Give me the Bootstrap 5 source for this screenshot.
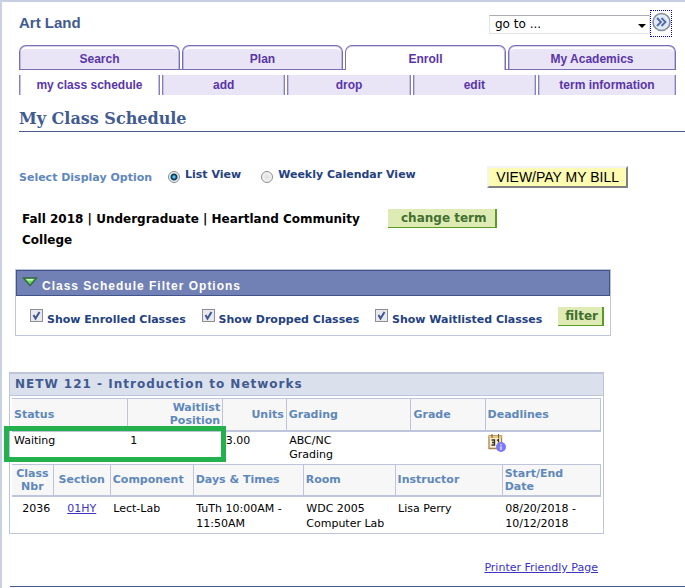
<!DOCTYPE html>
<html lang="en">
<head>
<meta charset="utf-8">
<meta name="viewport" content="width=device-width, initial-scale=1">
<title>My Class Schedule</title>
<link href="https://cdn.jsdelivr.net/npm/bootstrap@5.3.0/dist/css/bootstrap.min.css" rel="stylesheet">
<style>
  :root { --navy: #415a90; --violet: #5a35a8; --steel: #5f88ba; --edge: #bec5db; }
  body { font: 11px/15px "DejaVu Sans", Verdana, sans-serif; color: #000; background: #fff; }
  .page { border-top: 2px solid #c7cfe1; border-left: 2px solid #c9d2e5; min-height: 100vh; }
  .arial { font-family: "Liberation Sans", Arial, sans-serif; }
  .topbar { padding: 8px 13px 0 17px; height: 43px; }
  .student { font-size: 15px; line-height: 20px; font-weight: 700; color: var(--navy); margin: 3px 0 0; }
  .goto { width: 161px; height: 19px; margin-top: 5px; padding: 0 5px; font-size: 12px; line-height: 15px; color: #000; appearance: none;
    border: 1px solid #e2e3ea; border-top-color: #abadb3; border-radius: 1px;
    background: #fff url("data:image/svg+xml,%3Csvg xmlns='http://www.w3.org/2000/svg' viewBox='0 0 8 4'%3E%3Cpath d='M0 0h8L4 4z'/%3E%3C/svg%3E") no-repeat right 3px top 8px / 8px 4px; }
  .go-btn { width: 22px; height: 27px; padding: 1px; border: 1px dotted #0000c8; background: none; display: block; line-height: 0; }
  .go-btn svg { display: block; margin-bottom: 4px; }
  .tabs, .subtabs { display: flex; gap: 2px; margin: 0 9px 0 17px; text-align: center; font-size: 12px; font-weight: 700; }
  .tabs { border-bottom: 1px solid #7770b5; }
  .tabs a, .subtabs a { color: var(--violet); text-decoration: none; }
  .tabs a { flex: 161 1 0; height: 24px; line-height: 26px; border: 1px solid #7770b5; border-bottom: 0; border-radius: 7px 7px 0 0; background: #e9e5f6;
    box-shadow: inset 1px 0 #bdb8e0, inset -1px 0 #bdb8e0, inset 0 1px #d4d0eb, inset 0 3px #fff; }
  .tabs a.current { height: 25px; margin-bottom: -1px; background: #fff; box-shadow: inset 0 1px #d4d0eb, inset -1px 0 #bdb8e0; }
  .tabs a.last { flex-grow: 168; }
  .subtabs { margin-top: 5px; }
  .subtabs a { flex: 124 1 0; line-height: 20px; background: #e9e5f6; border: solid #8580bd; border-width: 0 1px; box-shadow: inset 1px 0 #c5c1e3, inset -1px 0 #c5c1e3; }
  .subtabs a.current { flex-grow: 142; background: #fff; }
  .subtabs a.last { flex-grow: 139; }
  h1 { font: 700 16px/22px "DejaVu Serif", serif; color: var(--navy); margin: 13px 0 0 17px; padding-bottom: 1px; border-bottom: 1px solid #4a5a90; }
  .options { margin: 34px 57px 0 17px; color: #24417f; font-weight: 700; }
  .options label { padding-top: 1px; }
  .options .caption-text { color: var(--steel); padding: 4px 12px 0 0; margin-right: 4px; }
  .options input { appearance: none; width: 12px; height: 12px; margin: 4px 5px 0 0; border: 1px solid #8a8d91; border-radius: 50%; background: radial-gradient(#ddd, #fff); flex: none; }
  .options input:checked { background: radial-gradient(circle, #5cc5ee 0 1px, #14547c 2px, #123a58 3px, #eee 4px); }
  .bill { height: 22px; padding: 0 7px; border: 2px solid; border-color: #f3f3f3 #808080 #808080 #f3f3f3; background: #fdfcb2; color: #000; font-size: 14px; line-height: 18px; }
  .term { margin: 21px 0 0 20px; }
  .term p { width: 350px; font-size: 12px; line-height: 21px; font-weight: 700; margin: 0 16px 0 0; }
  .green-btn { border: solid #5b9b22; border-width: 0 2px 1px 0; background: #dfebb5; color: #42702f; font-size: 12px; font-weight: 700; line-height: 18px; padding: 0 4px 0 7px; }
  .green-btn.term-btn { padding: 0 8px 0 13px; }
  .filters { margin: 18px 74px 0 13px; border: 1px solid var(--edge); }
  .filters h2 { margin: 0; height: 26px; padding: 0 5px; border: 1px solid #415489; background: #7281b5; color: #fff; font-size: 12px; line-height: 30px; font-weight: 700; letter-spacing: 1px; }
  .filters h2 svg { display: block; margin-top: 6px; }
  .checks { padding: 11px 6px 8px 14px; color: #24417f; font-weight: 700; }
  .checks label { line-height: 15px; padding-top: 5px; }
  .checks input { appearance: none; flex: none; width: 13px; height: 13px; margin: 2px 4px 0 0; border: 1px solid #8c8e92;
    background: #e7eaf0 url("data:image/svg+xml,%3Csvg xmlns='http://www.w3.org/2000/svg' viewBox='0 0 11 11'%3E%3Cpath d='M2.500 5l2 3.500L8.500 2' fill='none' stroke='%2341568f' stroke-width='2'/%3E%3C/svg%3E") center / 11px 11px; }
  .course { margin: 36px 81px 0 7px; padding: 0 2px; border: 1px solid var(--edge); border-top-width: 2px; }
  .course h2 { margin: 0 -2px 2px; padding: 0 5px; background: #dae1ed; border-bottom: 1px solid var(--edge); color: var(--navy); font-size: 12px; line-height: 21px; font-weight: 700; letter-spacing: 1px; }
  .course table { width: 100%; table-layout: fixed; border-collapse: collapse; }
  .course th { height: 32px; padding: 0 2px; background: #f7f7f7; border: 1px solid var(--edge); border-bottom-width: 2px; color: var(--steel); line-height: 13px; vertical-align: middle; }
  .course th:first-child { border-left: 0; }
  .course td { padding: 2px 3px; vertical-align: top; line-height: 15px; }
  .course .grades td { line-height: 14px; height: 32px; }
  .course .grades td:first-child { padding-left: 2px; }
  .course .meetings td { height: 37px; padding-top: 4px; }
  .course td svg { display: block; }
  .ring { position: absolute; left: -8px; bottom: 2px; width: 222px; height: 36px; border: 5px solid #22b14c; pointer-events: none; }
  .page a.plain { color: #3a33c4; }
  .printer { margin: 26px 87px 0 0; }
  .closing { margin: 11px 0 0 8px; border: 0; border-top: 1px solid #415a90; opacity: 1; }
</style>
<script src="https://cdn.jsdelivr.net/npm/bootstrap@5.3.0/dist/js/bootstrap.bundle.min.js"></script>
</head>
<body>
<main class="page">
  <header class="topbar d-flex align-items-start">
    <p class="student arial me-auto">Art Land</p>
    <select class="goto" aria-label="Go to"><option>go to ...</option></select>
    <button class="go-btn" type="button" aria-label="Go">
      <svg width="19" height="20" viewBox="0 0 19 20"><circle cx="9.500" cy="10" r="8.500" fill="#dfe9f8" stroke="#858b98" stroke-width="1.500"/><path d="M5 6l4 4-4 4M9.500 6l4 4-4 4" fill="none" stroke="#5269a8" stroke-width="1.800"/></svg>
    </button>
  </header>

  <nav class="tabs arial" aria-label="Sections">
    <a href="#">Search</a><a href="#">Plan</a><a href="#" class="current" aria-current="page">Enroll</a><a href="#" class="last">My Academics</a>
  </nav>
  <nav class="subtabs arial" aria-label="Enroll pages">
    <a href="#" class="current" aria-current="page">my class schedule</a><a href="#">add</a><a href="#">drop</a><a href="#">edit</a><a href="#" class="last">term information</a>
  </nav>

  <h1>My Class Schedule</h1>

  <div class="options d-flex align-items-start">
    <span class="caption-text">Select Display Option</span>
    <label class="d-flex me-3"><input type="radio" name="view" checked>List View</label>
    <label class="d-flex ms-1"><input type="radio" name="view">Weekly Calendar View</label>
    <button type="button" class="bill arial ms-auto">VIEW/PAY MY BILL</button>
  </div>

  <div class="term d-flex align-items-start">
    <p>Fall 2018 | Undergraduate | Heartland Community College</p>
    <button type="button" class="green-btn term-btn">change term</button>
  </div>

  <section class="filters">
    <h2 class="arial d-flex align-items-start"><svg width="16" height="10" viewBox="0 0 16 10" class="me-1"><path d="M1.500 1h13L8 8.500z" fill="#6ed65c" stroke="#356f43" stroke-width="1.500"/><path d="M4 2h8L10.500 3.500h-5z" fill="#d5fbc9"/></svg>Class Schedule Filter Options</h2>
    <div class="checks d-flex align-items-start justify-content-between">
      <div class="d-flex"><input id="enrolled" type="checkbox" checked><label for="enrolled">Show Enrolled Classes</label></div>
      <div class="d-flex"><input id="dropped" type="checkbox" checked><label for="dropped">Show Dropped Classes</label></div>
      <div class="d-flex"><input id="waitlisted" type="checkbox" checked><label for="waitlisted">Show Waitlisted Classes</label></div>
      <button type="button" class="green-btn">filter</button>
    </div>
  </section>

  <section class="course">
    <h2>NETW 121 - Introduction to Networks</h2>
    <div class="position-relative">
      <table class="grades">
        <colgroup><col style="width:19.6%"><col style="width:16.2%"><col style="width:10.8%"><col style="width:21.2%"><col style="width:12.6%"><col style="width:19.6%"></colgroup>
        <thead><tr><th>Status</th><th class="text-end">Waitlist Position</th><th class="text-end">Units</th><th>Grading</th><th>Grade</th><th>Deadlines</th></tr></thead>
        <tbody><tr><td>Waiting</td><td>1</td><td>3.00</td><td>ABC/NC<br>Grading</td><td></td>
          <td><svg width="19" height="19" viewBox="0 0 19 19" role="img" aria-label="Academic calendar deadlines"><path d="M1 2h12.500v12.500H1z" fill="#faf0cb" stroke="#a98252" stroke-width="1.300"/><path d="M1 2h12.500v2H1z" fill="#e7c87e"/><path d="M4 0v4M10.500 0v4" stroke="#7c5b36"/><path d="M3.500 6h3v5h-3M4 8.500h2.500M9 6.500l1.500-1v3" fill="none" stroke="#33302c" stroke-width="1.300"/><circle cx="13" cy="13" r="5" fill="#7b78fa"/><path d="M13 10v1.300M13 12.300V16" stroke="#ddf" stroke-width="1.500"/></svg></td></tr></tbody>
      </table>
      <div class="ring"></div>
    </div>
    <table class="meetings">
      <colgroup><col style="width:7%"><col style="width:9.7%"><col style="width:14.1%"><col style="width:18.7%"><col style="width:15.6%"><col style="width:18.2%"><col style="width:16.7%"></colgroup>
      <thead><tr><th class="text-center">Class Nbr</th><th class="text-center">Section</th><th>Component</th><th>Days &amp; Times</th><th>Room</th><th>Instructor</th><th>Start/End<br>Date</th></tr></thead>
      <tbody><tr><td class="text-end">2036</td><td class="text-center"><a class="plain" href="#">01HY</a></td><td>Lect-Lab</td><td>TuTh 10:00AM -<br>11:50AM</td><td>WDC 2005<br>Computer Lab</td><td>Lisa Perry</td><td>08/20/2018 -<br>10/12/2018</td></tr></tbody>
    </table>
  </section>

  <p class="printer text-end"><a class="plain" href="#">Printer Friendly Page</a></p>
  <hr class="closing">
</main>
</body>
</html>
